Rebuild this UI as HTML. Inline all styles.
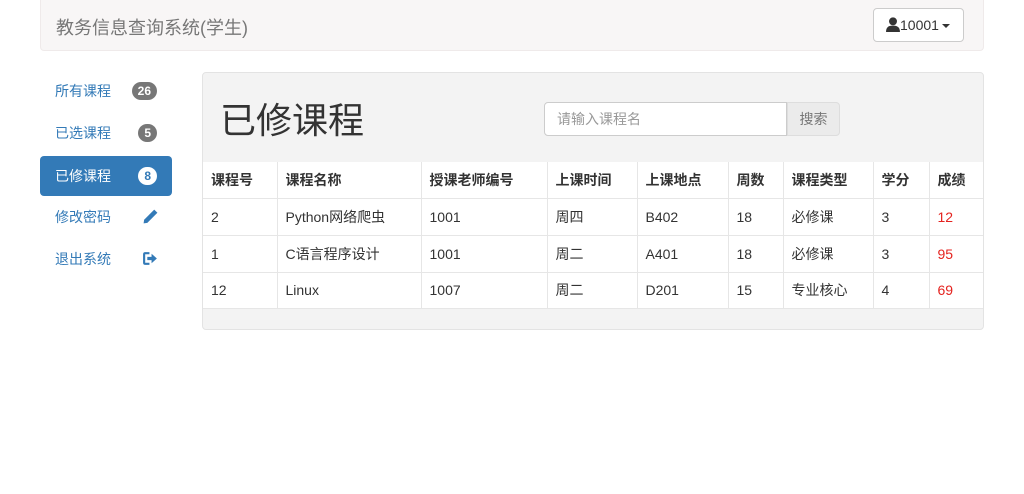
<!DOCTYPE html>
<html><head><meta charset="utf-8">
<style>
*{box-sizing:border-box;margin:0;padding:0}
body{width:1024px;height:494px;background:#fff;font-family:"Liberation Sans","Noto Sans CJK SC",sans-serif;font-size:14px;color:#333;position:relative;overflow:hidden}
.nav{position:absolute;left:40px;top:0;width:944px;height:51px;background:#f8f6f6;border:1px solid #efeaea;border-top:none;border-radius:0 0 4px 4px}
.brand{position:absolute;left:15px;top:14px;font-size:18px;color:#777}
.ubtn{position:absolute;left:832px;top:8px;width:91px;height:34px;background:#fff;border:1px solid #ccc;border-radius:4px;font-size:14px;line-height:32px;padding-left:12px;color:#333}
.ubtn svg{vertical-align:-2px}
.caret{display:inline-block;width:0;height:0;border-left:4px solid transparent;border-right:4px solid transparent;border-top:4px solid #333;vertical-align:middle;margin-left:3px}
.side{position:absolute;left:40px;top:70px;width:132px}
.side div{height:42px;line-height:42px;padding-left:15px;color:#337ab7;position:relative;border-radius:4px}
.side .act{background:#337ab7;color:#fff;height:40px;line-height:40px;margin:2px 0 0}
.badge{position:absolute;right:15px;top:12px;height:18px;min-width:18px;padding:0 6px;border-radius:9px;background:#777;color:#fff;font-size:12px;font-weight:bold;line-height:18px;text-align:center}
.act .badge{background:#fff;color:#337ab7;top:11px}
.ico{position:absolute;right:13px;top:12px}
.panel{position:absolute;left:202px;top:72px;width:782px;height:258px;background:#f3f3f3;border:1px solid #e3e3e3;border-radius:4px;overflow:hidden}
.h1{position:absolute;left:17px;top:26px;font-size:36px;color:#333;line-height:44px}
.inp{position:absolute;left:341px;top:29px;width:243px;height:34px;background:#fff;border:1px solid #ccc;border-radius:4px 0 0 4px;color:#999;padding-left:12px;line-height:32px}
.sb{position:absolute;left:584px;top:29px;width:53px;height:34px;background:#ebebeb;border:1px solid #ddd;border-radius:0 4px 4px 0;color:#777;line-height:32px;text-align:center}
table{position:absolute;left:0;top:89px;width:782px;border-collapse:collapse;background:#fff}
td,th{height:36.7px;padding:0 8px;border:1px solid #e6e6e6;text-align:left;font-size:14px}
tr td:first-child,tr th:first-child{border-left:none}
tr td:last-child,tr th:last-child{border-right:none}
tr:first-child th{border-top:none}
th{font-weight:bold}
.r{color:#e4231f}
</style></head><body>
<div class="nav"><div class="brand">教务信息查询系统(学生)</div>
<div class="ubtn"><svg width="14" height="15" viewBox="0 0 13 14"><circle cx="6.5" cy="4" r="3.7" fill="#333"/><path d="M0 14 C0 9 3 8 6.5 8 C10 8 13 9 13 14Z" fill="#333"/></svg>10001<span class="caret"></span></div></div>
<div class="side">
<div>所有课程<span class="badge">26</span></div>
<div>已选课程<span class="badge">5</span></div>
<div class="act">已修课程<span class="badge">8</span></div>
<div>修改密码<svg class="ico" width="17" height="17" viewBox="0 0 16 16"><path d="M11.5 1.5 L14.5 4.5 L5 14 L1.5 14.5 L2 11Z" fill="#337ab7"/></svg></div>
<div>退出系统<svg class="ico" width="17" height="17" viewBox="0 0 16 16"><path d="M7 2 H3 Q1 2 1 4 V12 Q1 14 3 14 H7 V12 H3 V4 H7Z" fill="#337ab7"/><path d="M5 6.5 H9 V3.5 L14 8 L9 12.5 V9.5 H5Z" fill="#337ab7"/></svg></div>
</div>
<div class="panel">
<div class="h1">已修课程</div>
<div class="inp">请输入课程名</div><div class="sb">搜索</div>
<table>
<colgroup><col style="width:74px"><col style="width:144px"><col style="width:126px"><col style="width:90px"><col style="width:91px"><col style="width:55px"><col style="width:90px"><col style="width:56px"><col style="width:56px"></colgroup>
<tr><th>课程号</th><th>课程名称</th><th>授课老师编号</th><th>上课时间</th><th>上课地点</th><th>周数</th><th>课程类型</th><th>学分</th><th>成绩</th></tr>
<tr><td>2</td><td>Python网络爬虫</td><td>1001</td><td>周四</td><td>B402</td><td>18</td><td>必修课</td><td>3</td><td class="r">12</td></tr>
<tr><td>1</td><td>C语言程序设计</td><td>1001</td><td>周二</td><td>A401</td><td>18</td><td>必修课</td><td>3</td><td class="r">95</td></tr>
<tr><td>12</td><td>Linux</td><td>1007</td><td>周二</td><td>D201</td><td>15</td><td>专业核心</td><td>4</td><td class="r">69</td></tr>
</table>
</div>
</body></html>
